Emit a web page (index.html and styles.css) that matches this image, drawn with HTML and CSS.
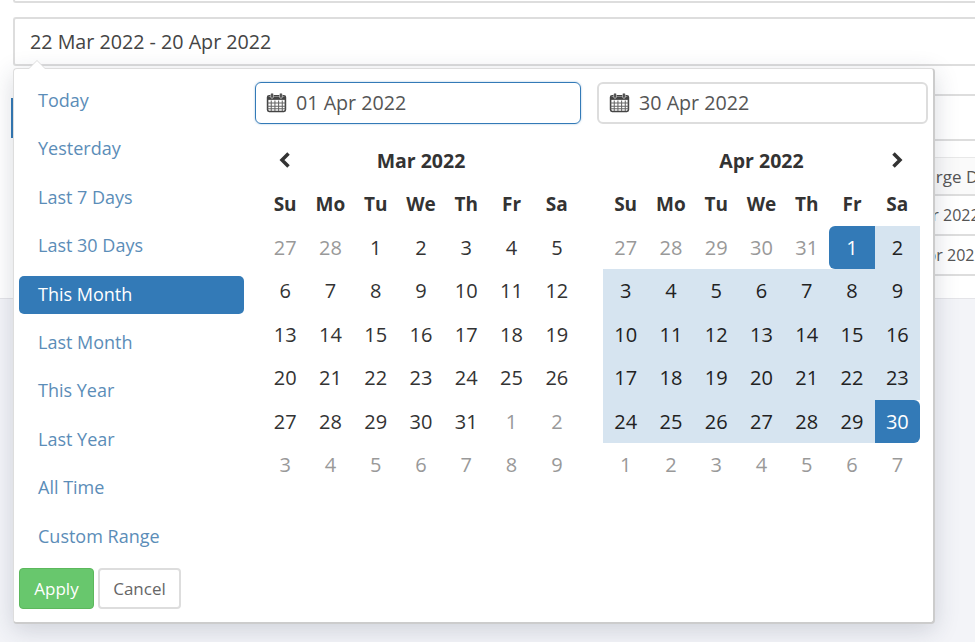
FILE: index.html
```html
<!DOCTYPE html>
<html lang="en">
<head>
    <meta charset="UTF-8">
    <meta name="viewport" content="width=device-width, initial-scale=1.0">
    <title>Date Range</title>
    <link rel="stylesheet" href="styles.css">
</head>
<body>
    <div class="panel">
        <div class="top-field"></div>
        <div class="date-field">22 Mar 2022 - 20 Apr 2022</div>
        <div class="behind">
            <div class="behind-btn"></div>
            <div class="behind-table">
                <div class="behind-line"></div>
                <div class="behind-head">Discharge Date</div>
                <div class="behind-row">20 Apr 2022</div>
                <div class="behind-row">19 Apr 2022</div>
            </div>
        </div>
    </div>

    <div class="daterangepicker">
        <div class="ranges">
            <ul>
                <li>Today</li>
                <li>Yesterday</li>
                <li>Last 7 Days</li>
                <li>Last 30 Days</li>
                <li class="active">This Month</li>
                <li>Last Month</li>
                <li>This Year</li>
                <li>Last Year</li>
                <li>All Time</li>
                <li>Custom Range</li>
            </ul>
            <div class="range-buttons">
                <button class="btn btn-apply">Apply</button>
                <button class="btn btn-cancel">Cancel</button>
            </div>
        </div>

        <div class="calendar left">
            <div class="date-input focused">
                <svg class="cal-icon" viewBox="0 0 20 20"><use href="#calendar"></use></svg>
                <span>01 Apr 2022</span>
            </div>
            <table>
                <thead>
                    <tr class="month-row">
                        <th><svg class="chevron" viewBox="0 0 14 18"><path d="M10.5 2.5 4 9l6.500 6.500"/></svg></th>
                        <th colspan="5">Mar 2022</th>
                        <th></th>
                    </tr>
                    <tr><th>Su</th><th>Mo</th><th>Tu</th><th>We</th><th>Th</th><th>Fr</th><th>Sa</th></tr>
                </thead>
                <tbody>
                    <tr><td class="off">27</td><td class="off">28</td><td>1</td><td>2</td><td>3</td><td>4</td><td>5</td></tr>
                    <tr><td>6</td><td>7</td><td>8</td><td>9</td><td>10</td><td>11</td><td>12</td></tr>
                    <tr><td>13</td><td>14</td><td>15</td><td>16</td><td>17</td><td>18</td><td>19</td></tr>
                    <tr><td>20</td><td>21</td><td>22</td><td>23</td><td>24</td><td>25</td><td>26</td></tr>
                    <tr><td>27</td><td>28</td><td>29</td><td>30</td><td>31</td><td class="off">1</td><td class="off">2</td></tr>
                    <tr><td class="off">3</td><td class="off">4</td><td class="off">5</td><td class="off">6</td><td class="off">7</td><td class="off">8</td><td class="off">9</td></tr>
                </tbody>
            </table>
        </div>

        <div class="calendar right">
            <div class="date-input">
                <svg class="cal-icon" viewBox="0 0 20 20"><use href="#calendar"></use></svg>
                <span>30 Apr 2022</span>
            </div>
            <table>
                <thead>
                    <tr class="month-row">
                        <th></th>
                        <th colspan="5">Apr 2022</th>
                        <th><svg class="chevron" viewBox="0 0 14 18"><path d="M3.500 2.500 10 9l-6.500 6.500"/></svg></th>
                    </tr>
                    <tr><th>Su</th><th>Mo</th><th>Tu</th><th>We</th><th>Th</th><th>Fr</th><th>Sa</th></tr>
                </thead>
                <tbody>
                    <tr><td class="off">27</td><td class="off">28</td><td class="off">29</td><td class="off">30</td><td class="off">31</td><td class="start">1</td><td class="in-range">2</td></tr>
                    <tr class="in-range"><td>3</td><td>4</td><td>5</td><td>6</td><td>7</td><td>8</td><td>9</td></tr>
                    <tr class="in-range"><td>10</td><td>11</td><td>12</td><td>13</td><td>14</td><td>15</td><td>16</td></tr>
                    <tr class="in-range"><td>17</td><td>18</td><td>19</td><td>20</td><td>21</td><td>22</td><td>23</td></tr>
                    <tr class="in-range"><td>24</td><td>25</td><td>26</td><td>27</td><td>28</td><td>29</td><td class="end">30</td></tr>
                    <tr><td class="off">1</td><td class="off">2</td><td class="off">3</td><td class="off">4</td><td class="off">5</td><td class="off">6</td><td class="off">7</td></tr>
                </tbody>
            </table>
        </div>
    </div>

    <svg class="icon-defs" aria-hidden="true">
        <symbol id="calendar" viewBox="0 0 20 20">
            <rect x="1.500" y="3.500" width="17" height="15" rx="1.500" fill="#fff" stroke="#444" stroke-width="1.500"/>
            <path d="M1.500 4.500h17v3h-17z" fill="#444"/>
            <path d="M1.500 10.500h17M1.500 13.500h17M1.500 16h17M5 8v10M8.500 8v10M12 8v10M15.500 8v10" stroke="#666" stroke-width="1" fill="none"/>
            <rect x="4.500" y="1" width="2.500" height="5" rx="1.200" fill="#444" stroke="#fff" stroke-width=".5"/>
            <rect x="13" y="1" width="2.500" height="5" rx="1.200" fill="#444" stroke="#fff" stroke-width=".5"/>
        </symbol>
    </svg>
</body>
</html>
```

FILE: styles.css
```css
* {
    box-sizing: border-box;
}

html, body {
    height: 100%;
}

body {
    margin: 0;
    overflow: hidden;
    position: relative;
    background-color: #f3f4f8;
    font-family: 'Open Sans', sans-serif;
    font-size: 20px;
    color: #444;
}

.panel {
    height: 299px;
    padding-left: 13px;
    background: #fff;
    border-bottom: 1px solid #e4e4e8;
}

.top-field {
    height: 3px;
    border: 2px solid #ddd;
    border-top: 0;
    border-right: 0;
    border-radius: 0 0 0 4px;
    margin-bottom: 14px;
}

.date-field {
    height: 49px;
    padding: 7px 15px;
    line-height: 31px;
    font-size: 19.700px;
    border: 2px solid #ddd;
    border-right: 0;
    border-radius: 3px 0 0 3px;
}

.behind {
    display: flex;
    justify-content: space-between;
    padding-top: 32px;
}

.behind-btn {
    width: 4px;
    height: 40px;
    margin-left: -2px;
    background: #337ab7;
}

.behind-table {
    width: 60px;
    margin-top: -4px;
    font-size: 16px;
    color: #555;
    white-space: nowrap;
    overflow: hidden;
    direction: rtl;
}

.behind-line {
    height: 47px;
    border-top: 2px solid #ddd;
    border-bottom: 2px solid #ddd;
    margin-bottom: 16px;
}

.behind-head,
.behind-row {
    height: 40px;
    line-height: 38px;
    border-bottom: 2px solid #ddd;
    direction: ltr;
    padding-left: 0;
}

.behind-head {
    height: 39px;
    margin-left: -32px;
    background: #fafafa;
    border-top: 1px solid #e8e8e8;
    font-size: 17px;
}

.behind-row {
    margin-left: -25px;
}

.behind-row + .behind-row {
    margin-left: -21px;
}

/* picker */
.daterangepicker {
    position: absolute;
    left: 13px;
    top: 68px;
    width: 922px;
    height: 556px;
    display: flex;
    background: #fff;
    border: 1px solid #ddd;
    border-right: 2px solid #ccc;
    border-bottom: 2px solid #ccc;
    border-radius: 4px;
    box-shadow: 0 6px 24px rgba(40, 50, 80, 0.18);
}

.daterangepicker::before,
.daterangepicker::after {
    content: '';
    position: absolute;
    left: 14px;
    top: -9px;
    border-left: 9px solid transparent;
    border-right: 9px solid transparent;
    border-bottom: 9px solid #ddd;
}

.daterangepicker::after {
    left: 15px;
    top: -8px;
    border-left-width: 8px;
    border-right-width: 8px;
    border-bottom: 8px solid #fff;
}

.ranges {
    width: 232px;
    flex: none;
    padding: 13px 0 0 5px;
}

.ranges ul {
    list-style: none;
    margin: 0;
    padding: 0;
}

.ranges li {
    height: 38px;
    margin-bottom: 10.400px;
    padding-left: 19px;
    line-height: 36px;
    font-size: 18px;
    color: #5b8db8;
    border-radius: 5px;
}

.ranges li.active {
    width: 225px;
    background: #337ab7;
    color: #fff;
}

.range-buttons {
    display: flex;
    gap: 4px;
    margin-top: 12.400px;
}

.btn {
    height: 41px;
    font-family: inherit;
    font-size: 17px;
    border-radius: 4px;
    padding: 0;
}

.btn-apply {
    width: 75px;
    border: 1px solid #5cb85c;
    background: #68c76d;
    color: #fff;
}

.btn-cancel {
    width: 83px;
    border: 2px solid #ddd;
    background: #fff;
    color: #666;
}

.calendar {
    flex: none;
    padding-top: 13px;
}

.calendar.left {
    width: 342px;
    margin-left: 9px;
}

.calendar.right {
    width: 331px;
}

.date-input {
    display: flex;
    align-items: center;
    gap: 9px;
    height: 42px;
    margin-bottom: -1px;
    padding-left: 10px;
    padding-bottom: 2px;
    border: 2px solid #ddd;
    border-radius: 6px;
    font-size: 19.700px;
    color: #555;
}

.calendar.left .date-input {
    width: 326px;
    border: 1px solid #337ab7;
    box-shadow: 0 0 2px rgba(51, 122, 183, 0.5);
}

.cal-icon {
    width: 21px;
    height: 21px;
}

.icon-defs {
    display: none;
}

table {
    width: 317px;
    table-layout: fixed;
    border-collapse: collapse;
    margin-top: 15px;
    text-align: center;
    font-size: 20px;
}

.calendar.left table {
    margin-left: 7.500px;
}

.calendar.right table {
    margin-left: 6px;
}

th {
    height: 43.500px;
    padding: 0;
    font-weight: 700;
    font-size: 19px;
    color: #333;
}

.month-row th {
    height: 44px;
    font-size: 19.500px;
}

td {
    height: 43.500px;
    padding: 0;
    color: #333;
}

td.off {
    color: #999;
}

.in-range td,
td.in-range {
    background: #d6e4f0;
    color: #222;
}

td.start,
.in-range td.end {
    background: #337ab7;
    color: #fff;
}

td.start {
    border-radius: 6px 0 0 6px;
}

.in-range td.end {
    border-radius: 0 6px 6px 0;
}

.chevron {
    display: block;
    width: 14px;
    height: 18px;
    margin: 0 auto;
    fill: none;
    stroke: #333;
    stroke-width: 3.500;
}
```
